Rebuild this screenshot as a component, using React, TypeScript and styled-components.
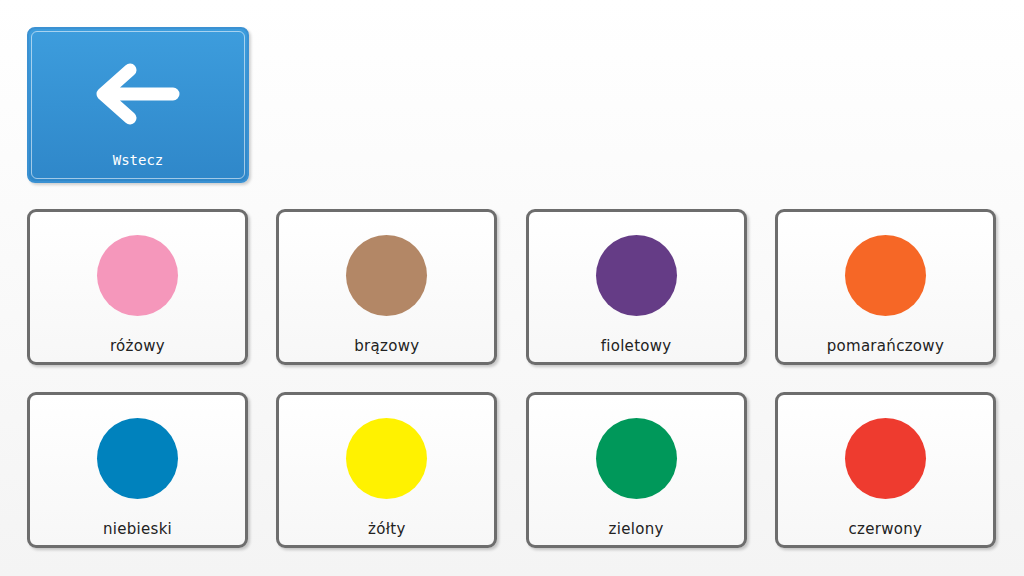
import styled, { createGlobalStyle } from "styled-components";

const GlobalStyle = createGlobalStyle`
  html, body {
    margin: 0;
    padding: 0;
    height: 100%;
  }
  body {
    background: linear-gradient(#ffffff, #f4f4f4);
    font-family: "DejaVu Sans", sans-serif;
  }
`;

const Page = styled.div`
  width: 1024px;
  height: 576px;
  box-sizing: border-box;
  padding: 27px 0 0 27px;
  display: flex;
  flex-direction: column;
  gap: 26px;
`;

const BackButton = styled.button`
  width: 222px;
  height: 156px;
  box-sizing: border-box;
  border: 2px solid #3b91d2;
  border-radius: 8px;
  padding: 0;
  background: linear-gradient(#3d9ddd, #2f87c9);
  box-shadow: 2px 2px 3px rgba(0, 0, 0, 0.18);
  position: relative;
  display: flex;
  flex-direction: column;
  align-items: center;
  cursor: pointer;

  &::after {
    content: "";
    position: absolute;
    inset: 2px;
    border: 1px solid rgba(255, 255, 255, 0.55);
    border-radius: 6px;
    pointer-events: none;
  }
`;

const ArrowIcon = styled.svg`
  margin-top: 34px;
  width: 86px;
  height: 62px;
`;

const BackLabel = styled.span`
  margin-top: 27px;
  color: #ffffff;
  font-family: "DejaVu Sans Mono", monospace;
  font-size: 14px;
`;

const Grid = styled.div`
  display: grid;
  grid-template-columns: repeat(4, 221px);
  grid-auto-rows: 156px;
  column-gap: 28.3px;
  row-gap: 27px;
`;

const Card = styled.div`
  box-sizing: border-box;
  border: 3px solid #6d6d6d;
  border-radius: 9px;
  background: linear-gradient(#ffffff, #f7f7f7);
  box-shadow: 2px 2px 3px rgba(0, 0, 0, 0.2);
  display: flex;
  flex-direction: column;
  align-items: center;
`;

const Swatch = styled.div<{ $color: string }>`
  margin-top: 23px;
  width: 81px;
  height: 81px;
  border-radius: 50%;
  background: ${(p) => p.$color};
`;

const Label = styled.span`
  margin-top: 21px;
  color: #222222;
  font-size: 15px;
  letter-spacing: 0.3px;
`;

const colors = [
  { name: "różowy", color: "#f597bb" },
  { name: "brązowy", color: "#b38766" },
  { name: "fioletowy", color: "#653c86" },
  { name: "pomarańczowy", color: "#f66726" },
  { name: "niebieski", color: "#0082bd" },
  { name: "żółty", color: "#fff200" },
  { name: "zielony", color: "#00985a" },
  { name: "czerwony", color: "#ee3b2f" },
];

export default function App() {
  return (
    <>
      <GlobalStyle />
      <Page>
        <BackButton>
          <ArrowIcon viewBox="0 0 86 62">
            <path
              d="M35 7 L8 31 L35 55 M8 31 L78 31"
              fill="none"
              stroke="#ffffff"
              strokeWidth="13"
              strokeLinecap="round"
              strokeLinejoin="round"
            />
          </ArrowIcon>
          <BackLabel>Wstecz</BackLabel>
        </BackButton>
        <Grid>
          {colors.map((c) => (
            <Card key={c.name}>
              <Swatch $color={c.color} />
              <Label>{c.name}</Label>
            </Card>
          ))}
        </Grid>
      </Page>
    </>
  );
}
